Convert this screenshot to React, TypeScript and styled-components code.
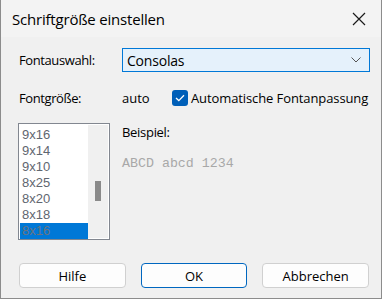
import styled, { createGlobalStyle } from 'styled-components';

const GlobalStyle = createGlobalStyle`
  html, body {
    margin: 0;
    padding: 0;
    background: #3a3a3a;
  }
  * {
    box-sizing: border-box;
  }
`;

const uiFont = `'Open Sans', 'Noto Sans', 'Liberation Sans', sans-serif`;

const Dialog = styled.div`
  width: 382px;
  height: 299px;
  display: flex;
  flex-direction: column;
  background: #f0f0f0;
  border: 1px solid #8c8c8c;
  border-top: none;
  font-family: ${uiFont};
  color: #000;
  overflow: hidden;
`;

const TitleBar = styled.div`
  height: 37px;
  display: flex;
  align-items: center;
  justify-content: space-between;
  padding: 0 14px 0 11px;
  background: #f3f3f3;
`;

const Title = styled.span`
  font-size: 15px;
  letter-spacing: -0.2px;
`;

const CloseButton = styled.div`
  width: 16px;
  height: 16px;
  display: flex;
  align-items: center;
  justify-content: center;
`;

const Body = styled.div`
  flex: 1;
  padding: 11px 11px 0 17px;
  display: flex;
  flex-direction: column;
`;

const FormRow = styled.div<{ $height: number; $mb?: number }>`
  display: grid;
  grid-template-columns: 104px 1fr;
  align-items: center;
  height: ${(p) => p.$height}px;
  margin-bottom: ${(p) => p.$mb ?? 0}px;
`;

const Label = styled.span`
  font-size: 13px;
  letter-spacing: -0.4px;
  padding-left: 1px;
`;

const Combo = styled.div`
  height: 24px;
  display: flex;
  align-items: center;
  justify-content: space-between;
  padding: 0 8px 0 4px;
  background: #e5f1fb;
  border: 1px solid #0078d7;
  font-size: 14px;
  letter-spacing: -0.2px;
`;

const SizeRow = styled.div`
  display: flex;
  align-items: center;
`;

const AutoText = styled.span`
  font-size: 13px;
  width: 50px;
`;

const CheckBox = styled.div`
  width: 16px;
  height: 16px;
  border-radius: 3px;
  background: #005fb8;
  display: flex;
  align-items: center;
  justify-content: center;
  margin-right: 3px;
`;

const CheckLabel = styled.span`
  font-size: 13px;
  letter-spacing: -0.1px;
`;

const Lower = styled.div`
  display: grid;
  grid-template-columns: 104px 1fr;
`;

const ListBox = styled.div`
  width: 92px;
  height: 117px;
  border: 1px solid #828790;
  background: #fff;
  display: flex;
  padding: 1px;
`;

const Items = styled.div`
  flex: 1;
  display: flex;
  flex-direction: column;
  padding-top: 2px;
`;

const Item = styled.div<{ $selected?: boolean }>`
  height: 16px;
  line-height: 16px;
  padding-left: 2px;
  font-family: 'Liberation Sans', Arial, sans-serif;
  font-size: 13px;
  color: ${(p) => (p.$selected ? '#6a7480' : '#5f6670')};
  background: ${(p) => (p.$selected ? '#0078d7' : 'transparent')};
`;

const ScrollTrack = styled.div`
  width: 20px;
  background: #f0f0f0;
  display: flex;
  justify-content: center;
  padding-top: 56px;
`;

const Thumb = styled.div`
  width: 6px;
  height: 20px;
  background: #8a8a8a;
`;

const Preview = styled.div`
  display: flex;
  flex-direction: column;
`;

const PreviewTitle = styled.span`
  font-size: 13px;
  letter-spacing: -0.3px;
  line-height: 18px;
`;

const Sample = styled.span`
  font-family: 'Liberation Mono', 'DejaVu Sans Mono', monospace;
  font-size: 13.3px;
  color: #a8a8a8;
  margin-top: 15px;
`;

const Footer = styled.div`
  display: flex;
  gap: 15px;
  padding: 0 12px 10px 18px;
  margin-top: auto;
`;

const Button = styled.div<{ $primary?: boolean }>`
  width: 107px;
  height: 25px;
  border-radius: 4px;
  display: flex;
  align-items: center;
  justify-content: center;
  font-size: 13px;
  background: #fdfdfd;
  border: 1px solid ${(p) => (p.$primary ? '#0067c0' : '#d0d0d0')};
`;

const sizes = ['9x16', '9x14', '9x10', '8x25', '8x20', '8x18', '8x16'];

const App = () => {
  return (
    <>
      <GlobalStyle />
      <Dialog>
        <TitleBar>
          <Title>Schriftgröße einstellen</Title>
          <CloseButton>
            <svg width="14" height="14" viewBox="0 0 14 14">
              <path d="M1 1 L13 13 M13 1 L1 13" stroke="#1a1a1a" strokeWidth="1.2" />
            </svg>
          </CloseButton>
        </TitleBar>
        <Body>
          <FormRow $height={24} $mb={17}>
            <Label>Fontauswahl:</Label>
            <Combo>
              <span>Consolas</span>
              <svg width="10" height="6" viewBox="0 0 10 6">
                <path d="M0.5 0.5 L5 5 L9.5 0.5" fill="none" stroke="#555" strokeWidth="1" />
              </svg>
            </Combo>
          </FormRow>
          <FormRow $height={16} $mb={18}>
            <Label>Fontgröße:</Label>
            <SizeRow>
              <AutoText>auto</AutoText>
              <CheckBox>
                <svg width="10" height="8" viewBox="0 0 10 8">
                  <path d="M1 4 L3.8 6.6 L9 1.2" fill="none" stroke="#fff" strokeWidth="1.3" />
                </svg>
              </CheckBox>
              <CheckLabel>Automatische Fontanpassung</CheckLabel>
            </SizeRow>
          </FormRow>
          <Lower>
            <ListBox>
              <Items>
                {sizes.map((s, i) => (
                  <Item key={s} $selected={i === sizes.length - 1}>
                    {s}
                  </Item>
                ))}
              </Items>
              <ScrollTrack>
                <Thumb />
              </ScrollTrack>
            </ListBox>
            <Preview>
              <PreviewTitle>Beispiel:</PreviewTitle>
              <Sample>ABCD abcd 1234</Sample>
            </Preview>
          </Lower>
        </Body>
        <Footer>
          <Button>Hilfe</Button>
          <Button $primary>OK</Button>
          <Button>Abbrechen</Button>
        </Footer>
      </Dialog>
    </>
  );
};

export default App;
